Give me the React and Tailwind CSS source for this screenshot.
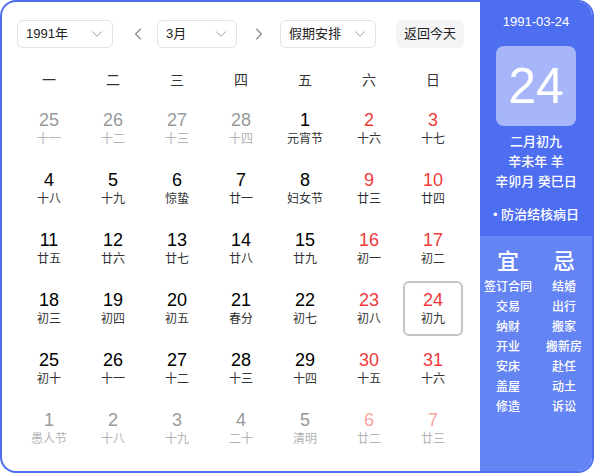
import React from "react";
import { ChevronDown, ChevronLeft, ChevronRight } from "lucide-react";

const font = { fontFamily: '"Liberation Sans", Arial, "Noto Sans CJK SC", sans-serif' };

// t: 'n' normal, 'g' gray (other month), 'r' red weekend, 'lr' light red (other month weekend)
const rows = [
  [["25","十一","g"],["26","十二","g"],["27","十三","g"],["28","十四","g"],["1","元宵节","n"],["2","十六","r"],["3","十七","r"]],
  [["4","十八","n"],["5","十九","n"],["6","惊蛰","n"],["7","廿一","n"],["8","妇女节","n"],["9","廿三","r"],["10","廿四","r"]],
  [["11","廿五","n"],["12","廿六","n"],["13","廿七","n"],["14","廿八","n"],["15","廿九","n"],["16","初一","r"],["17","初二","r"]],
  [["18","初三","n"],["19","初四","n"],["20","初五","n"],["21","春分","n"],["22","初七","n"],["23","初八","r"],["24","初九","s"]],
  [["25","初十","n"],["26","十一","n"],["27","十二","n"],["28","十三","n"],["29","十四","n"],["30","十五","r"],["31","十六","r"]],
  [["1","愚人节","g"],["2","十八","g"],["3","十九","g"],["4","二十","g"],["5","清明","g"],["6","廿二","lr"],["7","廿三","lr"]],
];

const weekdays = ["一","二","三","四","五","六","日"];
const yi = ["签订合同","交易","纳财","开业","安床","盖屋","修造"];
const ji = ["结婚","出行","搬家","搬新房","赴任","动土","诉讼"];

function Cell({ d }) {
  const [num, lunar, t] = d;
  let numCls = "text-black";
  let lunCls = "text-[#333]";
  if (t === "g") { numCls = "text-[#999]"; lunCls = "text-[#b3b3b3]"; }
  if (t === "r" || t === "s") { numCls = "text-[#f03a3a]"; }
  if (t === "lr") { numCls = "text-[#f5a3a3]"; lunCls = "text-[#b3b3b3]"; }
  const box = t === "s" ? "border-[#c4c4c4]" : "border-transparent";
  return (
    <div className="h-[60px] px-[2px] pt-[1px]">
      <div className={`h-[55px] border-2 rounded-[6px] flex flex-col items-center pt-[6px] ${box}`}>
        <div className={`text-[18px] leading-[22px] ${numCls}`}>{num}</div>
        <div className={`text-[12px] leading-[16px] ${lunCls}`}>{lunar}</div>
      </div>
    </div>
  );
}

function Select({ w, label }) {
  return (
    <div className={`h-[28px] ${w} border border-[#e2e2e2] rounded-[6px] flex items-center justify-between pl-[8px] pr-[6px] text-[13px] text-[#222]`}>
      <span>{label}</span>
      <ChevronDown size={18} strokeWidth={1.3} color="#9a9a9a" />
    </div>
  );
}

export default function App() {
  return (
    <div style={font} className="w-[594px] h-[473px] border-2 border-[#4e6ef2] rounded-[16px] overflow-hidden flex bg-white">
      <div className="w-[478px] flex flex-col pt-[18px] pl-[15px]">
        <div className="flex items-center h-[28px]">
          <Select w="w-[96px]" label="1991年" />
          <div className="w-[44px] flex justify-center pl-[6px]">
            <ChevronLeft size={20} strokeWidth={1.4} color="#888" />
          </div>
          <Select w="w-[80px]" label="3月" />
          <div className="w-[43px] flex justify-center">
            <ChevronRight size={20} strokeWidth={1.4} color="#888" />
          </div>
          <Select w="w-[96px]" label="假期安排" />
          <div className="ml-[20px] h-[28px] w-[68px] rounded-[6px] bg-[#f4f4f6] flex items-center justify-center text-[13px] text-[#222]">
            返回今天
          </div>
        </div>
        <div className="grid grid-cols-[repeat(7,64px)] mt-[12px]">
          {weekdays.map((w) => (
            <div key={w} className="h-[40px] flex items-center justify-center text-[14px] text-[#333]">{w}</div>
          ))}
          {rows.flat().map((d, i) => (
            <Cell key={i} d={d} />
          ))}
        </div>
      </div>
      <div className="w-[112px] flex flex-col text-white">
        <div className="h-[234px] bg-[#4e6ef2] flex flex-col items-center pt-[12px]">
          <div className="text-[13px] leading-[16px]">1991-03-24</div>
          <div className="mt-[16px] w-[80px] h-[80px] rounded-[8px] bg-[#a6b6f8] flex items-center justify-center text-[50px] leading-none">24</div>
          <div className="mt-[6px] text-[13px] leading-[20px] font-medium">二月初九</div>
          <div className="text-[13px] leading-[20px] font-medium">辛未年 羊</div>
          <div className="text-[13px] leading-[20px] font-medium">辛卯月 癸巳日</div>
          <div className="mt-[13px] text-[13px] leading-[20px] font-medium">• 防治结核病日</div>
        </div>
        <div className="flex-1 bg-[#6584f4] grid grid-cols-2 pt-[13px]">
          <div className="flex flex-col items-center">
            <div className="text-[22px] leading-[26px] mb-[2px] font-medium">宜</div>
            {yi.map((x) => (
              <div key={x} className="text-[12px] leading-[20px] whitespace-nowrap font-medium">{x}</div>
            ))}
          </div>
          <div className="flex flex-col items-center">
            <div className="text-[22px] leading-[26px] mb-[2px] font-medium">忌</div>
            {ji.map((x) => (
              <div key={x} className="text-[12px] leading-[20px] whitespace-nowrap font-medium">{x}</div>
            ))}
          </div>
        </div>
      </div>
    </div>
  );
}
